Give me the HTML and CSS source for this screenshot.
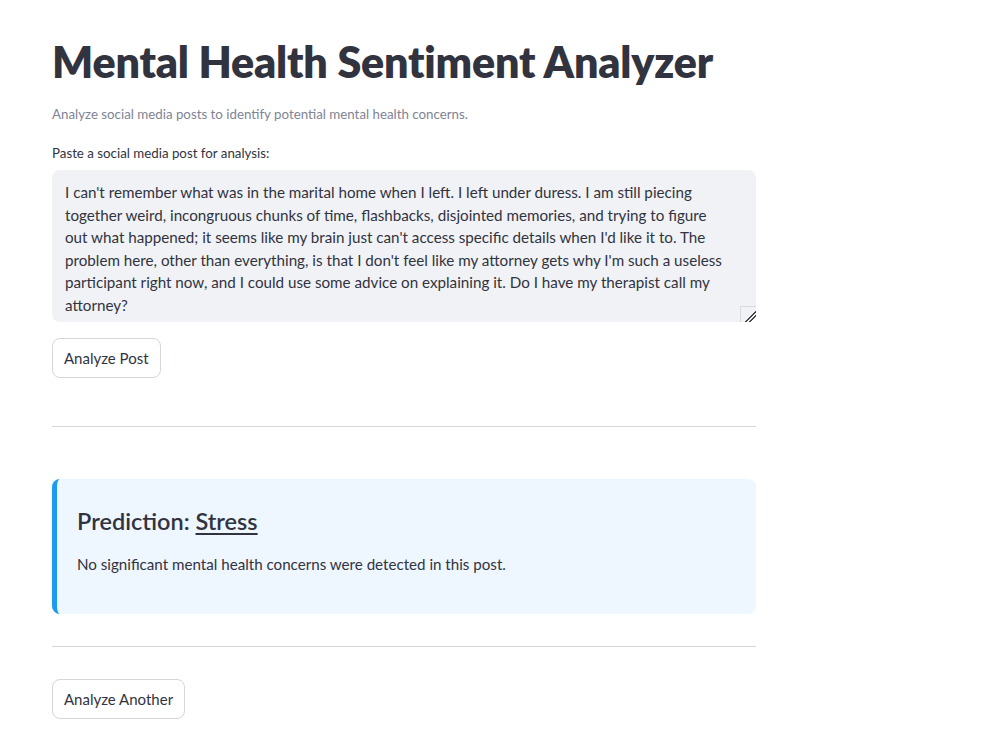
FILE: index.html
```html
<!DOCTYPE html>
<html lang="en">
<head>
<meta charset="utf-8">
<title>Mental Health Sentiment Analyzer</title>
<link rel="stylesheet" href="styles.css">
</head>
<body>
<main class="main">
  <h1 class="title">Mental Health Sentiment Analyzer</h1>
  <p class="subtitle">Analyze social media posts to identify potential mental health concerns.</p>
  <label class="label" for="post">Paste a social media post for analysis:</label>
  <div class="textarea-wrap">
    <textarea id="post" class="textarea">I can't remember what was in the marital home when I left. I left under duress. I am still piecing together weird, incongruous chunks of time, flashbacks, disjointed memories, and trying to figure out what happened; it seems like my brain just can't access specific details when I'd like it to. The problem here, other than everything, is that I don't feel like my attorney gets why I'm such a useless participant right now, and I could use some advice on explaining it. Do I have my therapist call my attorney?</textarea>
    <span class="grip"></span>
  </div>
  <button class="btn btn-analyze">Analyze Post</button>
  <hr class="divider divider-1">
  <section class="result">
    <h3 class="result-title">Prediction: <u>Stress</u></h3>
    <p class="result-text">No significant mental health concerns were detected in this post.</p>
  </section>
  <hr class="divider divider-2">
  <button class="btn btn-another">Analyze Another</button>
</main>
</body>
</html>
```
FILE: styles.css
```css
* { box-sizing: border-box; }
html, body { margin: 0; padding: 0; background: #fff; }
body {
  font-family: "Lato", "Liberation Sans", sans-serif;
  color: #31333f;
}
.main {
  width: 704px;
  margin-left: 52px;
  padding-top: 36px;
  display: flex;
  flex-direction: column;
  align-items: flex-start;
}
.title {
  margin: 0;
  font-size: 43px;
  font-weight: 800;
  line-height: 52px;
  letter-spacing: -0.2px;
  color: #31333f;
}
.subtitle {
  margin: 16px 0 0;
  font-size: 13.3px;
  line-height: 20px;
  color: #808495;
}
.label {
  margin-top: 19px;
  font-size: 13.3px;
  line-height: 20px;
  color: #31333f;
}
.textarea-wrap {
  position: relative;
  width: 704px;
  margin-top: 7px;
}
.textarea {
  display: block;
  width: 100%;
  height: 152px;
  resize: none;
  border: none;
  border-radius: 8px;
  background: #f0f2f6;
  padding: 11px 27px 11px 13px;
  font-family: "Lato", "Liberation Sans", sans-serif;
  font-size: 15.2px;
  line-height: 22.6px;
  color: #31333f;
  overflow: hidden;
  outline: none;
}
.grip {
  position: absolute;
  right: 0;
  bottom: 0;
  width: 16px;
  height: 16px;
  border-top: 1px solid #d8d9dd;
  border-left: 1px solid #d8d9dd;
  background:
    linear-gradient(135deg, transparent 62%, #444 62%, #444 68%, transparent 68%, transparent 76%, #444 76%, #444 83%, transparent 83%);
}
.btn {
  margin-top: 16px;
  height: 40px;
  padding: 0 11px;
  border: 1px solid #d5d6da;
  border-radius: 8px;
  background: #fff;
  font-family: "Lato", "Liberation Sans", sans-serif;
  font-size: 15px;
  color: #31333f;
  cursor: pointer;
}
.divider {
  width: 100%;
  margin: 0;
  border: none;
  border-top: 1px solid #d6d6d9;
}
.divider-1 { margin-top: 48px; }
.result {
  width: 100%;
  margin-top: 52px;
  padding: 27px 24px 39px 20px;
  background: #eef6ff;
  border-left: 5px solid #1c9cf0;
  border-radius: 8px;
}
.result-title {
  margin: 0;
  font-size: 23.5px;
  font-weight: 600;
  line-height: 30px;
  color: #31333f;
}
.result-title u { text-decoration-thickness: 2px; text-underline-offset: 3px; }
.result-text {
  margin: 17px 0 0;
  font-size: 15.15px;
  line-height: 22px;
  color: #31333f;
}
.divider-2 { margin-top: 32px; }
.btn-another { margin-top: 32px; }
```
